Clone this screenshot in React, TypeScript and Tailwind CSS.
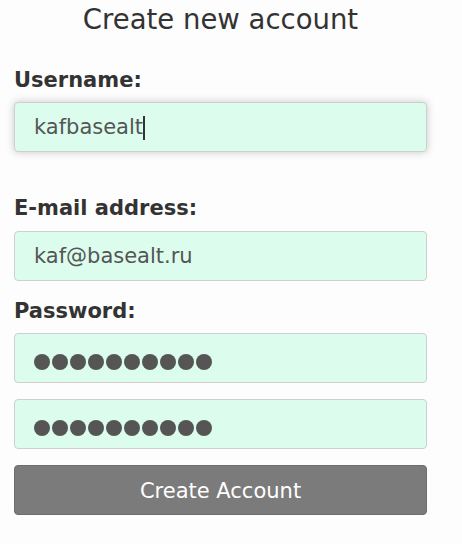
const FONT = "font-['DejaVu_Sans',sans-serif]";

function Dots() {
  return (
    <div className="flex items-center gap-[2px] pt-[7px]">
      {Array.from({ length: 10 }).map((_, i) => (
        <span key={i} className="block w-4 h-4 rounded-full bg-[#555]" />
      ))}
    </div>
  );
}

function Field({ children, focused = false }: { children: React.ReactNode; focused?: boolean }) {
  return (
    <div
      className={`h-[50px] rounded-[4px] border border-[#cfcfcf] bg-[#dcfded] pl-[19px] flex items-center text-[21px] leading-[24px] text-[#555] ${
        focused ? 'shadow-[0_0_8px_rgba(0,0,0,0.22)]' : ''
      }`}
    >
      {children}
    </div>
  );
}

export default function App() {
  return (
    <div className={`min-h-screen bg-[#fdfdfd] ${FONT}`}>
      <div className="w-[413px] ml-[14px]">
        {/* Title */}
        <h2 className="pt-[3px] text-center text-[27.5px] leading-[32px] text-[#333]">Create new account</h2>

        {/* Username */}
        <label className="block mt-[33px] text-[21px] leading-[24px] font-bold text-[#333]">Username:</label>
        <div className="mt-[10px]">
          <Field focused>
            <span>kafbasealt</span>
            <span className="inline-block w-[2px] h-[24px] bg-[#333] mt-[1px]" />
          </Field>
        </div>

        {/* Email */}
        <label className="block mt-[44px] text-[21px] leading-[24px] font-bold text-[#333]">E-mail address:</label>
        <div className="mt-[11px]">
          <Field>kaf@basealt.ru</Field>
        </div>

        {/* Password */}
        <label className="block mt-[18px] text-[21px] leading-[24px] font-bold text-[#333]">Password:</label>
        <div className="mt-[10px] flex flex-col gap-4">
          <Field>
            <Dots />
          </Field>
          <Field>
            <Dots />
          </Field>
          <button className="h-[50px] rounded-[4px] border border-[#6e6e6e] bg-[#7b7b7b] text-white text-[21px] leading-[24px] pt-[2px]">
            Create Account
          </button>
        </div>
      </div>
    </div>
  );
}
